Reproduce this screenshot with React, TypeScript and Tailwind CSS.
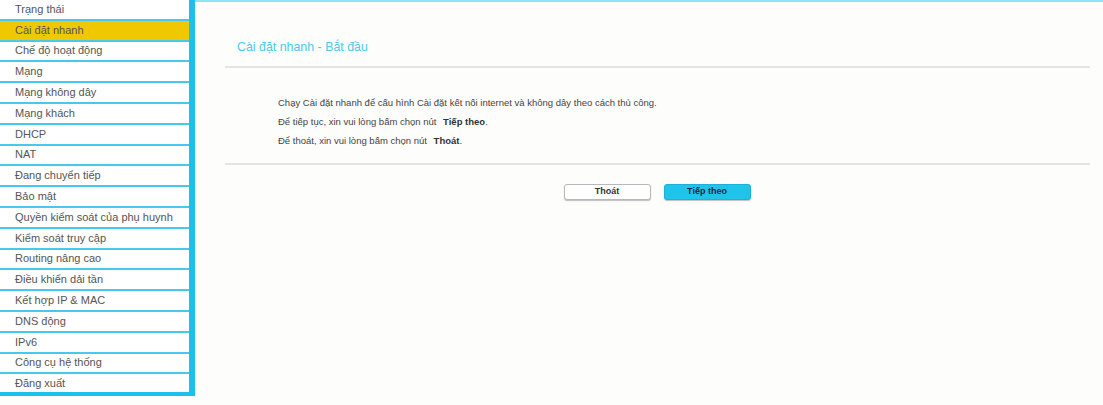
const menu = [
  "Trạng thái",
  "Cài đặt nhanh",
  "Chế độ hoạt động",
  "Mạng",
  "Mạng không dây",
  "Mạng khách",
  "DHCP",
  "NAT",
  "Đang chuyển tiếp",
  "Bảo mật",
  "Quyền kiểm soát của phụ huynh",
  "Kiểm soát truy cập",
  "Routing nâng cao",
  "Điều khiển dải tần",
  "Kết hợp IP & MAC",
  "DNS động",
  "IPv6",
  "Công cụ hệ thống",
  "Đăng xuất",
];

function Sidebar() {
  return (
    <div className="w-[195px] shrink-0 self-start border-r-[6px] border-b-[4px] border-[#1cc0ea] bg-white">
      {menu.map((label, i) => (
        <div
          key={label}
          className={
            "pl-[15px] flex items-center text-[11px] leading-none text-[#555] " +
            (i === menu.length - 1 ? "h-[18px] " : "h-[20.8px] border-b-2 border-[#48c8ec] ") +
            (i === 1 ? "bg-[#f0c800] text-[#444]" : "")
          }
        >
          {label}
        </div>
      ))}
    </div>
  );
}

export default function App() {
  return (
    <div
      className="flex w-[1103px] h-[405px] bg-[#fdfdfb] overflow-hidden"
      style={{ fontFamily: '"Liberation Sans", Arial, sans-serif' }}
    >
      <Sidebar />
      <div className="flex-1 border-t-2 border-[#8ee4f6]">
        <div className="pl-[42px] pt-[36px] pb-[10px] text-[12.4px] leading-[18px] text-[#48cce8]">
          Cài đặt nhanh - Bắt đầu
        </div>
        <div className="ml-[30px] mr-[13px] h-[2px] bg-[#e4e4e2]" />
        <div className="pl-[83px] pt-[29px] pb-[16px] text-[9.5px] text-[#444] flex flex-col gap-[7px] leading-[12px]">
          <p>Chạy Cài đặt nhanh để cấu hình Cài đặt kết nối internet và không dây theo cách thủ công.</p>
          <p>
            Để tiếp tục, xin vui lòng bấm chọn nút <b className="ml-1 text-[#333]">Tiếp theo</b>.
          </p>
          <p>
            Để thoát, xin vui lòng bấm chọn nút <b className="ml-1 text-[#333]">Thoát</b>.
          </p>
        </div>
        <div className="ml-[30px] mr-[13px] h-[2px] bg-[#e4e4e2]" />
        <div className="flex justify-center gap-[13px] pt-[19px] pl-[16px]">
          <button className="w-[87px] h-[16px] rounded-[3px] border border-[#b8b8b8] bg-white text-[9px] font-bold text-[#333] shadow-[0_1px_1px_rgba(0,0,0,0.25)]">
            Thoát
          </button>
          <button className="w-[87px] h-[16px] rounded-[3px] border border-[#1ab2d8] bg-[#1ec4ea] text-[9px] font-bold text-[#1a2a3a] shadow-[0_1px_1px_rgba(0,0,0,0.25)]">
            Tiếp theo
          </button>
        </div>
      </div>
    </div>
  );
}
